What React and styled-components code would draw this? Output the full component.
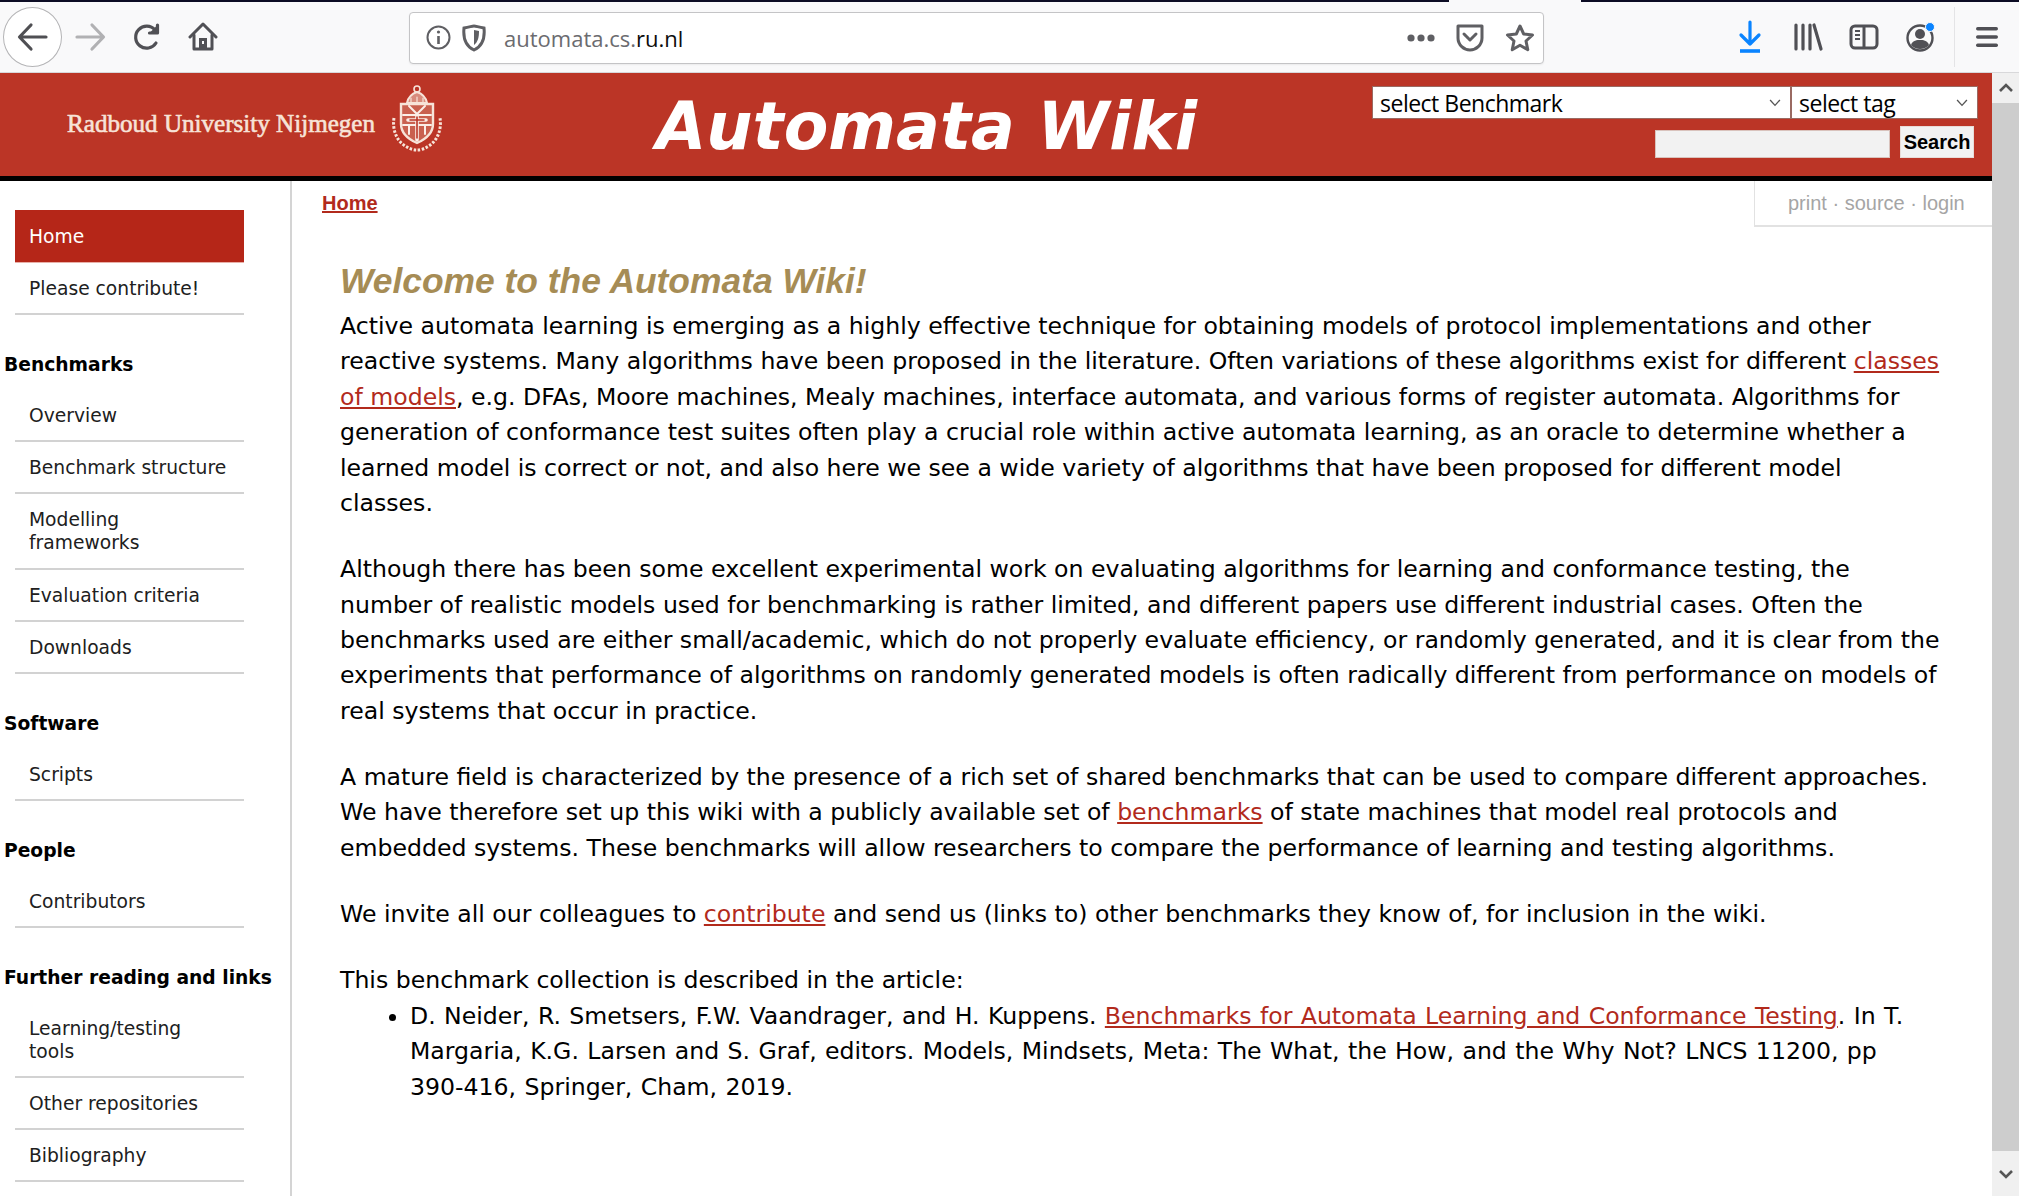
import React from "react";
import styled, { createGlobalStyle } from "styled-components";

const Global = createGlobalStyle`
  html, body { margin: 0; padding: 0; height: 100%; overflow: hidden; background: #fff; }
  #root { height: 100%; }
  * { box-sizing: border-box; }
`;

const Shell = styled.div`
  width: 2019px; height: 1196px; display: flex; flex-direction: column; overflow: hidden;
  font-family: "DejaVu Sans", Verdana, sans-serif; color: #000;
`;

const TabStrip = styled.div`
  height: 2px; flex: none; display: flex; background: #0c0c24;
`;
const TabGap = styled.div`
  width: 132px; margin-left: 1449px; background: #f9f9fa;
`;

const Toolbar = styled.div`
  height: 71px; flex: none; background: #f9f9fa; border-bottom: 1px solid #d8d8da;
  display: flex; align-items: center; padding: 0 0 0 3px; position: relative;
`;
const BackCircle = styled.div`
  width: 59px; height: 60px; flex: none; border-radius: 50%; border: 1px solid #b4b4b6; background: #fff;
  display: flex; align-items: center; justify-content: center; color: #4f4f53;
`;
const ToolIcon = styled.div`
  width: ${p => p.$w || 30}px; height: 32px; flex: none; margin-left: ${p => p.$ml || 0}px;
  display: flex; align-items: center; justify-content: center; color: ${p => p.$c || "#505055"};
`;
const UrlBar = styled.div`
  width: 1135px; height: 52px; flex: none; margin-left: 191px; background: #fff; margin-top: 1px;
  border: 1px solid #c4c4c6; border-radius: 4px; display: flex; align-items: center; padding: 0 8px 0 16px;
  box-shadow: 0 1px 2px rgba(0,0,0,.06);
`;
const UrlText = styled.div`
  margin-left: 18px; flex: 1; font-family: "Open Sans", sans-serif; font-size: 22px; color: #6b6b6f;
  b { font-weight: 400; color: #0c0c0d; }
`;
const Separator = styled.div`
  width: 1px; height: 60px; background: #e4e4e6; margin-left: 17px;
`;

const Body = styled.div`
  flex: 1; display: flex; min-height: 0;
`;
const Page = styled.div`
  width: 1992px; flex: none; display: flex; flex-direction: column; min-height: 0;
`;

const Header = styled.header`
  height: 108px; flex: none; background: #bb3526; border-bottom: 5px solid #000;
  display: flex; align-items: flex-start; position: relative;
`;
const Brand = styled.div`
  display: flex; align-items: center; width: 656px; padding: 11px 0 0 67px;
`;
const BrandName = styled.div`
  font-family: "Liberation Serif", serif; font-weight: 400; font-size: 25.1px; color: #f7e3d8; width: 323px; white-space: nowrap;
  margin-top: 11px; -webkit-text-stroke: .6px #f7e3d8;
`;
const Title = styled.h1`
  margin: 0; font-family: "DejaVu Sans", Verdana, sans-serif; font-weight: 700; font-style: italic;
  font-size: 65px; letter-spacing: 0; color: #fff; line-height: 108px; white-space: nowrap;
`;
const HeaderTools = styled.div`
  margin-left: auto; width: 620px; padding: 13px 14px 0 0; display: flex; flex-direction: column; align-items: flex-end;
`;
const SelectRow = styled.div`
  display: flex;
`;
const FakeSelect = styled.div`
  width: ${p => p.$w}px; height: 33px; background: #fff; border: 1px solid #9a6a62; 
  display: flex; align-items: center; justify-content: space-between; padding: 0 8px 0 7px;
  font-family: "Open Sans", sans-serif; font-size: 23px; letter-spacing: -.5px; color: #000; white-space: nowrap;
`;
const SearchRow = styled.div`
  display: flex; align-items: flex-end; margin: 7px 4px 0 0;
`;
const SearchInput = styled.div`
  width: 235px; height: 28px; background: #f2f2f2; border: 1px solid #d9c3bd;
`;
const SearchButton = styled.div`
  width: 74px; height: 32px; margin-left: 10px; background: #f2f2f2; border: 1px solid #e8dcd8;
  display: flex; align-items: center; justify-content: center;
  font-family: "Liberation Sans", Arial, sans-serif; font-weight: 700; font-size: 20px; color: #000;
`;

const Main = styled.div`
  flex: 1; display: flex; min-height: 0; position: relative;
`;
const Sidebar = styled.nav`
  width: 292px; flex: none; border-right: 2px solid #d4d4d4; padding: 29px 0 0 4px; font-size: 18.7px; overflow: hidden;
`;
const NavItem = styled.a`
  display: block; width: 229px; margin-left: 11px; padding: ${p => p.$active ? "15px 14px 14px" : "14px 14px 13px"};
  line-height: 23.1px; min-height: 52px;
  background: ${p => p.$active ? "#b52618" : "transparent"};
  color: ${p => p.$active ? "#fff" : "#202020"};
  border-bottom: 2px solid ${p => p.$active ? "#e8b0a8" : "#d2d2d2"};
  ${p => p.$active ? "border-bottom-width: 1px;" : ""}
`;
const NavHeading = styled.div`
  font-weight: 700; font-size: 18.7px; line-height: 24px; margin: 38px 0 13px; color: #000; white-space: nowrap;
`;

const Content = styled.main`
  flex: 1; padding: 0 0 0 30px; position: relative; min-width: 0;
`;
const Crumb = styled.a`
  display: block; font-family: "Liberation Sans", Arial, sans-serif; font-weight: 700; font-size: 20px; color: #b22a1c;
  text-decoration: underline; line-height: 24px; margin-top: 10px;
`;
const PageTools = styled.div`
  position: absolute; right: 0; top: 0; width: 238px; height: 46px; background: #fff;
  border-left: 1px solid #e2e2e2; border-bottom: 2px solid #e2e2e2;
  display: flex; align-items: center; padding-left: 33px;
  font-family: "Liberation Sans", Arial, sans-serif; font-size: 20px; color: #a5a5a5; white-space: nowrap;
`;
const Article = styled.article`
  padding: 0 0 0 18px;
`;
const Heading = styled.h2`
  margin: 44px 0 6px; font-family: "Liberation Sans", Arial, sans-serif; font-weight: 700; font-style: italic;
  font-size: 35.4px; line-height: 44px; color: #a68c55; white-space: nowrap;
`;
const Para = styled.p`
  margin: ${p => p.$first ? "0" : "30.8px"} 0 0; font-size: 23.6px; line-height: 35.4px; color: #000; white-space: nowrap;
`;
const Link = styled.a`
  color: #b22a1c; text-decoration: underline;
`;
const List = styled.ul`
  margin: 0; padding: 0 0 0 70px; font-size: 23.6px; line-height: 35.4px; white-space: nowrap; word-spacing: .9px;
  li { padding: 0; }
`;

const Scrollbar = styled.div`
  width: 27px; flex: none; background: #f0f0f0; display: flex; flex-direction: column; align-items: center; color: #505050;
`;
const ScrollBtn = styled.div`
  height: ${p => p.$h}px; flex: none; width: 100%; display: flex; align-items: center; justify-content: center;
`;
const Thumb = styled.div`
  flex: none; width: 100%; height: 1048px; background: #cdcdcd;
`;

const Chev = ({ size = 14, sw = 1.4 }) => (
  <svg width={size} height={size * 0.7} viewBox="0 0 14 10" fill="none" stroke="#555" strokeWidth={sw}><path d="M2 2l5 5.5L12 2" /></svg>
);

const Seal = () => (
  <svg width="54" height="68" viewBox="0 0 54 68" fill="none" stroke="#f7e3d8" strokeLinecap="round">
    <circle cx="27" cy="5" r="3" strokeWidth="1.6" />
    <path d="M27 8c-6 2-9 6-10 11h20c-1-5-4-9-10-11z" strokeWidth="2" fill="#d88b7c" />
    <path d="M21 19v-5M27 19v-6M33 19v-5" strokeWidth="1.2" />
    <path d="M11 20h32v20c0 9-7 15-16 19-9-4-16-10-16-19z" fill="#c9604f" strokeWidth="2.400" />
    <path d="M13 31h28M13 41h28M19 22l8 8 8-8M19 41v9M35 41v9" stroke="#fbeee8" strokeWidth="2" />
    <path d="M18 36h18M27 32v24" stroke="#fbeee8" strokeWidth="3.600" />
    <path d="M20 36h14M27 33v21" stroke="#bb3526" strokeWidth="1.600" />
    <path d="M4 34c-2 12 3 24 13 29 3 2 7 3 10 3s7-1 10-3c10-5 15-17 13-29" strokeWidth="3" strokeDasharray="2.500 1.600" strokeLinecap="butt" />
  </svg>
);

const icons = {
  back: <svg width="34" height="30" viewBox="0 0 34 30" fill="none" stroke="currentColor" strokeWidth="3.2" strokeLinecap="round" strokeLinejoin="round"><path d="M30 15H4M15 3L3.5 15 15 27" /></svg>,
  fwd: <svg width="32" height="30" viewBox="0 0 32 30" fill="none" stroke="currentColor" strokeWidth="3.2" strokeLinecap="round" strokeLinejoin="round"><path d="M2 15h26M17 3l11.5 12L17 27" /></svg>,
  reload: <svg width="28" height="30" viewBox="0 0 28 30" fill="none" stroke="currentColor" strokeWidth="3.2" strokeLinecap="round" strokeLinejoin="round"><path d="M23 21a11 11 0 1 1-1-13" /><path d="M24.500 3v8h-8" fill="currentColor" /></svg>,
  home: <svg width="30" height="30" viewBox="0 0 30 30" fill="none" stroke="currentColor" strokeWidth="3" strokeLinejoin="round" strokeLinecap="round"><path d="M2 15L15 2l13 13" /><path d="M6 13v14h18V13" /><rect x="11" y="16" width="8" height="11" fill="currentColor" stroke="none" /><rect x="14" y="19" width="2" height="3" fill="#f9f9fa" stroke="none" /></svg>,
  info: <svg width="25" height="25" viewBox="0 0 25 25" fill="none" stroke="currentColor" strokeWidth="2"><circle cx="12.500" cy="12.500" r="11" /><path d="M12.500 11v8" strokeWidth="2.600" /><circle cx="12.500" cy="7" r="1.600" fill="currentColor" stroke="none" /></svg>,
  shield: <svg width="24" height="28" viewBox="0 0 24 28" fill="none" stroke="currentColor" strokeWidth="3"><path d="M2 4c6-1 8-2 10-2s4 1 10 2c1 10-1 18-10 22C3 22 1 14 2 4z" /><path d="M12 6v15c4-3 5-8 5-14z" fill="currentColor" stroke="none" /></svg>,
  more: <svg width="30" height="10" viewBox="0 0 30 10" fill="currentColor"><circle cx="5" cy="5" r="3.600" /><circle cx="15" cy="5" r="3.600" /><circle cx="25" cy="5" r="3.600" /></svg>,
  pocket: <svg width="30" height="30" viewBox="0 0 30 30" fill="none" stroke="currentColor" strokeWidth="3" strokeLinecap="round" strokeLinejoin="round"><path d="M3 3h24v12c0 7-6 12-12 12S3 22 3 15z" /><path d="M9 11l6 6 6-6" /></svg>,
  star: <svg width="30" height="30" viewBox="0 0 30 30" fill="none" stroke="currentColor" strokeWidth="3" strokeLinejoin="round"><path d="M15 3l3.700 8 8.800 1-6.500 6 1.800 8.700L15 22.300 7.200 26.700 9 18l-6.500-6 8.800-1z" /></svg>,
  download: <svg width="24" height="34" viewBox="0 0 24 34" fill="none" stroke="currentColor" strokeWidth="3.2" strokeLinecap="round" strokeLinejoin="round"><path d="M12 2v22M3 15l9 9 9-9" /><path d="M2 31h20" strokeWidth="3.600" strokeLinecap="butt" /></svg>,
  library: <svg width="30" height="28" viewBox="0 0 30 28" fill="none" stroke="currentColor" strokeWidth="3.2" strokeLinecap="round"><path d="M3 2v24M10 2v24M17 2v24M21 2l7 24" /></svg>,
  sidebar: <svg width="30" height="26" viewBox="0 0 30 26" fill="none" stroke="currentColor" strokeWidth="3"><rect x="2" y="2" width="26" height="22" rx="4" /><path d="M15 2v22" /><path d="M6 7h5M6 11h5M6 15h5" strokeWidth="2" /></svg>,
  account: <svg width="32" height="32" viewBox="0 0 32 32" fill="none" stroke="currentColor"><circle cx="15" cy="17" r="12.500" strokeWidth="2.400" /><circle cx="15" cy="13" r="5" fill="currentColor" stroke="none" /><path d="M6 24c2-5 6-5 9-5s7 0 9 5c-3 3-6 4-9 4s-6-1-9-4z" fill="currentColor" stroke="none" /><circle cx="25" cy="6" r="4.500" fill="#0a84ff" stroke="#f9f9fa" strokeWidth="1" /></svg>,
  menu: <svg width="24" height="24" viewBox="0 0 24 24" fill="currentColor"><rect x="1" y="2" width="22" height="3.400" rx="1.700" /><rect x="1" y="10.300" width="22" height="3.400" rx="1.700" /><rect x="1" y="18.600" width="22" height="3.400" rx="1.700" /></svg>,
};

const nav = [
  { items: [["Home", true], ["Please contribute!"]] },
  { title: "Benchmarks", items: [["Overview"], ["Benchmark structure"], ["Modelling frameworks"], ["Evaluation criteria"], ["Downloads"]] },
  { title: "Software", items: [["Scripts"]] },
  { title: "People", items: [["Contributors"]] },
  { title: "Further reading and links", items: [["Learning/testing tools"], ["Other repositories"], ["Bibliography"]] },
];

export default function App() {
  return (
    <Shell>
      <Global />
      <TabStrip><TabGap /></TabStrip>
      <Toolbar>
        <BackCircle>{icons.back}</BackCircle>
        <ToolIcon $w={32} $ml={13} $c="#b1b1b3">{icons.fwd}</ToolIcon>
        <ToolIcon $ml={25}>{icons.reload}</ToolIcon>
        <ToolIcon $ml={26}>{icons.home}</ToolIcon>
        <UrlBar>
          <ToolIcon $w={25} $c="#5f5f63">{icons.info}</ToolIcon>
          <ToolIcon $w={24} $ml={11} $c="#5f5f63">{icons.shield}</ToolIcon>
          <UrlText>automata.cs.<b>ru.nl</b></UrlText>
          <ToolIcon $c="#5f5f63">{icons.more}</ToolIcon>
          <ToolIcon $ml={19} $c="#5f5f63">{icons.pocket}</ToolIcon>
          <ToolIcon $ml={20} $c="#5f5f63">{icons.star}</ToolIcon>
        </UrlBar>
        <ToolIcon $w={24} $ml={194} $c="#0a84ff">{icons.download}</ToolIcon>
        <ToolIcon $ml={31}>{icons.library}</ToolIcon>
        <ToolIcon $ml={26}>{icons.sidebar}</ToolIcon>
        <ToolIcon $w={32} $ml={26}>{icons.account}</ToolIcon>
        <Separator />
        <ToolIcon $w={24} $ml={20}>{icons.menu}</ToolIcon>
      </Toolbar>
      <Body>
        <Page>
          <Header>
            <Brand>
              <BrandName>Radboud University Nijmegen</BrandName>
              <Seal />
            </Brand>
            <Title>Automata Wiki</Title>
            <HeaderTools>
              <SelectRow>
                <FakeSelect $w={419}>select Benchmark<Chev /></FakeSelect>
                <FakeSelect $w={187}>select tag<Chev /></FakeSelect>
              </SelectRow>
              <SearchRow>
                <SearchInput />
                <SearchButton>Search</SearchButton>
              </SearchRow>
            </HeaderTools>
          </Header>
          <Main>
            <Sidebar>
              {nav.map((g, i) => (
                <React.Fragment key={i}>
                  {g.title && <NavHeading>{g.title}</NavHeading>}
                  {g.items.map(([label, active]) => (
                    <NavItem key={label} $active={active}>{label}</NavItem>
                  ))}
                </React.Fragment>
              ))}
            </Sidebar>
            <Content>
              <PageTools>print · source · login</PageTools>
              <Crumb>Home</Crumb>
              <Article>
                <Heading>Welcome to the Automata Wiki!</Heading>
                <Para $first>
                  Active automata learning is emerging as a highly effective technique for obtaining models of protocol implementations and other<br />
                  reactive systems. Many algorithms have been proposed in the literature. Often variations of these algorithms exist for different <Link>classes<br />of models</Link>, e.g. DFAs, Moore machines, Mealy machines, interface automata, and various forms of register automata. Algorithms for<br />
                  generation of conformance test suites often play a crucial role within active automata learning, as an oracle to determine whether a<br />
                  learned model is correct or not, and also here we see a wide variety of algorithms that have been proposed for different model<br />
                  classes.
                </Para>
                <Para>
                  Although there has been some excellent experimental work on evaluating algorithms for learning and conformance testing, the<br />
                  number of realistic models used for benchmarking is rather limited, and different papers use different industrial cases. Often the<br />
                  benchmarks used are either small/academic, which do not properly evaluate efficiency, or randomly generated, and it is clear from the<br />
                  experiments that performance of algorithms on randomly generated models is often radically different from performance on models of<br />
                  real systems that occur in practice.
                </Para>
                <Para>
                  A mature field is characterized by the presence of a rich set of shared benchmarks that can be used to compare different approaches.<br />
                  We have therefore set up this wiki with a publicly available set of <Link>benchmarks</Link> of state machines that model real protocols and<br />
                  embedded systems. These benchmarks will allow researchers to compare the performance of learning and testing algorithms.
                </Para>
                <Para>
                  We invite all our colleagues to <Link>contribute</Link> and send us (links to) other benchmarks they know of, for inclusion in the wiki.
                </Para>
                <Para>This benchmark collection is described in the article:</Para>
                <List>
                  <li>
                    D. Neider, R. Smetsers, F.W. Vaandrager, and H. Kuppens. <Link>Benchmarks for Automata Learning and Conformance Testing</Link>. In T.<br />
                    Margaria, K.G. Larsen and S. Graf, editors. Models, Mindsets, Meta: The What, the How, and the Why Not? LNCS 11200, pp<br />
                    390-416, Springer, Cham, 2019.
                  </li>
                </List>
              </Article>
            </Content>
          </Main>
        </Page>
        <Scrollbar>
          <ScrollBtn $h={30}><svg width="16" height="10" viewBox="0 0 16 10" fill="none" stroke="#555" strokeWidth="2.600"><path d="M2 8l6-6 6 6" /></svg></ScrollBtn>
          <Thumb />
          <ScrollBtn $h={45}><svg width="16" height="10" viewBox="0 0 16 10" fill="none" stroke="#555" strokeWidth="2.600"><path d="M2 2l6 6 6-6" /></svg></ScrollBtn>
        </Scrollbar>
      </Body>
    </Shell>
  );
}
